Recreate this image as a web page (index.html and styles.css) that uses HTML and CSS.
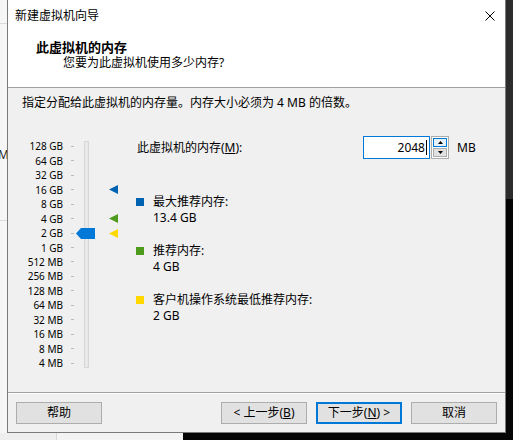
FILE: index.html
```html
<!DOCTYPE html>
<html lang="zh-CN">
<head>
<meta charset="utf-8">
<title>新建虚拟机向导</title>
<link rel="stylesheet" href="styles.css">
</head>
<body>
<div class="desk">
  <div class="side-left">
    <div class="sl-line sl-line-1"></div>
    <div class="sl-m">M</div>
    <div class="sl-line sl-line-2"></div>
  </div>

  <div class="dialog">
    <div class="titlebar">
      <span class="title">新建虚拟机向导</span>
      <svg class="close" width="10" height="10" viewBox="0 0 10 10"><path d="M0.5 0.5 L9.5 9.5 M9.5 0.5 L0.5 9.5" stroke="#000" stroke-width="1" fill="none"/></svg>
    </div>
    <div class="header">
      <div class="h-title">此虚拟机的内存</div>
      <div class="h-sub">您要为此虚拟机使用多少内存?</div>
    </div>
    <div class="body">
      <p class="intro">指定分配给此虚拟机的内存量。内存大小必须为 4 MB 的倍数。</p>
      <div class="content">
        <div class="slider">
          <div class="track"></div>
          <svg class="thumb" width="19" height="11" viewBox="0 0 19 11"><polygon points="0,5.5 5,0 19,0 19,11 5,11" fill="#0078d7"/></svg>
          <svg class="marker m-blue" width="9" height="9" viewBox="0 0 9 9"><polygon points="0,4.5 9,0 9,9" fill="#0063b1"/></svg>
          <svg class="marker m-green" width="9" height="9" viewBox="0 0 9 9"><polygon points="0,4.5 9,0 9,9" fill="#4e9a1c"/></svg>
          <svg class="marker m-yellow" width="9" height="9" viewBox="0 0 9 9"><polygon points="0,4.5 9,0 9,9" fill="#ffd800"/></svg>
          <div class="lbl">128 GB</div><div class="tick"></div>
          <div class="lbl">64 GB</div><div class="tick"></div>
          <div class="lbl">32 GB</div><div class="tick"></div>
          <div class="lbl">16 GB</div><div class="tick"></div>
          <div class="lbl">8 GB</div><div class="tick"></div>
          <div class="lbl">4 GB</div><div class="tick"></div>
          <div class="lbl">2 GB</div><div class="tick"></div>
          <div class="lbl">1 GB</div><div class="tick"></div>
          <div class="lbl">512 MB</div><div class="tick"></div>
          <div class="lbl">256 MB</div><div class="tick"></div>
          <div class="lbl">128 MB</div><div class="tick"></div>
          <div class="lbl">64 MB</div><div class="tick"></div>
          <div class="lbl">32 MB</div><div class="tick"></div>
          <div class="lbl">16 MB</div><div class="tick"></div>
          <div class="lbl">8 MB</div><div class="tick"></div>
          <div class="lbl">4 MB</div><div class="tick"></div>
        </div>

        <div class="panel">
          <div class="mem-row">
            <span class="mem-label">此虚拟机的内存(<u>M</u>):</span>
            <div class="mem-input"><span>2048</span><span class="caret"></span></div>
            <div class="spin">
              <div class="spin-btn spin-up"><svg width="5" height="3" viewBox="0 0 5 3"><polygon points="2.5,0 5,3 0,3" fill="#000"/></svg></div>
              <div class="spin-btn spin-down"><svg width="5" height="3" viewBox="0 0 5 3"><polygon points="0,0 5,0 2.5,3" fill="#000"/></svg></div>
            </div>
            <span class="unit">MB</span>
          </div>

          <div class="legend legend-first">
            <span class="sq sq-blue"></span>
            <div class="legend-text"><div>最大推荐内存:</div><div>13.4 GB</div></div>
          </div>
          <div class="legend">
            <span class="sq sq-green"></span>
            <div class="legend-text"><div>推荐内存:</div><div>4 GB</div></div>
          </div>
          <div class="legend">
            <span class="sq sq-yellow"></span>
            <div class="legend-text"><div>客户机操作系统最低推荐内存:</div><div>2 GB</div></div>
          </div>
        </div>
      </div>
    </div>
    <div class="footer">
      <div class="btn">帮助</div>
      <div class="btn btn-back">&lt; 上一步(<u>B</u>)</div>
      <div class="btn btn-default">下一步(<u>N</u>) &gt;</div>
      <div class="btn">取消</div>
    </div>
  </div>

  <div class="side-right"><div class="sr-top"></div></div>

  <div class="bottom-strip">
    <div class="bs-a"></div>
    <div class="bs-b"></div>
    <div class="bs-c"></div>
  </div>
</div>
</body>
</html>
```

FILE: styles.css
```css
* { box-sizing: border-box; margin: 0; padding: 0; }

html, body {
  width: 513px;
  height: 440px;
  overflow: hidden;
}

body {
  font-family: "Noto Sans", "Noto Sans CJK SC", sans-serif;
  font-size: 12px;
  line-height: 16px;
  color: #000;
  background: #f3f3f3;
}

.desk {
  display: grid;
  grid-template-columns: 7px 499px 7px;
  grid-template-rows: 433px 7px;
  width: 513px;
  height: 440px;
}

/* outside desktop bits */
.side-left {
  grid-column: 1;
  grid-row: 1;
  background: #f6f6f6;
  overflow: hidden;
  display: flex;
  flex-direction: column;
}
.sl-line { height: 1px; background: #dadada; flex: none; }
.sl-line-1 { margin-top: 23px; }
.sl-m { margin-top: 123px; margin-left: -2px; white-space: nowrap; color: #1a1a1a; height: 16px; }
.sl-line-2 { margin-top: 57px; }

.side-right {
  grid-column: 3;
  grid-row: 1 / 3;
  background: #050505;
}
.sr-top { height: 199px; background: #2c2c2c; }

.bottom-strip {
  grid-column: 1 / 3;
  grid-row: 2;
  display: flex;
}
.bs-a { width: 57px; background: #eeeeee; border-right: 1px solid #d6d6d6; }
.bs-b { width: 126px; background: #f3f3f3; }
.bs-c { flex: 1; background: #050505; }

/* dialog */
.dialog {
  grid-column: 2;
  grid-row: 1;
  display: flex;
  flex-direction: column;
  background: #f0f0f0;
  border: 1px solid #7a7a7a;
  border-top: 0;
}

.titlebar {
  height: 31px;
  flex: none;
  background: #fff;
  display: flex;
  align-items: center;
  justify-content: space-between;
  padding: 1px 10px 0 7px;
}

.header {
  height: 57px;
  flex: none;
  background: #fff;
  border-bottom: 1px solid #a0a0a0;
  padding: 8px 0 0 28px;
}
.h-title { font-weight: bold; font-size: 13px; }
.h-sub { padding-left: 27px; }

.body {
  flex: 1;
  padding: 7px 0 0 14px;
}
.intro { margin-bottom: 25px; }

.content { display: flex; align-items: flex-start; }

/* slider */
.slider {
  display: grid;
  grid-template-columns: 41px 8px 4px 1px 8px 5px 6px 14px 9px;
  grid-template-rows: repeat(16, 14.47px);
  padding-top: 3px;
  font-size: 10px;
  line-height: 14px;
}
.lbl {
  grid-column: 1;
  text-align: right;
  align-self: center;
  white-space: nowrap;
  color: #000;
}
.tick {
  grid-column: 3;
  width: 3px;
  height: 1px;
  background: #bcbcbc;
  align-self: center;
}
.track {
  grid-column: 6;
  grid-row: 1 / -1;
  margin: 2px 0 3px;
  background: #e9e9e9;
  border: 1px solid #d7d7d7;
}
.thumb {
  grid-column: 5 / 8;
  grid-row: 7;
  align-self: center;
  position: relative;
  z-index: 1;
}
.marker { grid-column: 9; align-self: center; }
.m-blue { grid-row: 4; }
.m-green { grid-row: 6; }
.m-yellow { grid-row: 7; }

/* right panel */
.panel {
  margin-left: 18px;
  display: flex;
  flex-direction: column;
}
.mem-row {
  display: flex;
  align-items: center;
  height: 23px;
}
.mem-label { width: 227px; padding-left: 1px; white-space: nowrap; }
.mem-input {
  width: 67px;
  height: 23px;
  border: 1px solid #0078d7;
  background: #fff;
  display: flex;
  justify-content: flex-end;
  align-items: center;
  padding-right: 2px;
}
.caret { width: 1px; height: 15px; background: #000; margin-left: 1px; }
.spin {
  margin-left: 1px;
  width: 18px;
  height: 23px;
  border: 1px solid #adadad;
  background: #fff;
  padding: 1px;
  display: flex;
  flex-direction: column;
  gap: 1px;
}
.spin-btn {
  flex: 1;
  display: flex;
  align-items: center;
  justify-content: center;
}
.spin-up { background: #e5f1fb; border: 1px solid #0078d7; }
.spin-down { background: #e1e1e1; border: 1px solid #adadad; }
.unit { margin-left: 8px; }

.legend { display: flex; align-items: flex-start; margin-top: 17px; }
.legend-first { margin-top: 35px; }
.sq { width: 8px; height: 8px; margin: 4px 9px 0 0; flex: none; }
.sq-blue { background: #0063b1; }
.sq-green { background: #4e9a1c; }
.sq-yellow { background: #ffd800; }
.legend-text { white-space: nowrap; }

/* footer */
.footer {
  flex: none;
  height: 40px;
  border-top: 1px solid #a0a0a0;
  box-shadow: inset 0 1px 0 #ffffff;
  padding: 9px 8px 8px;
  display: flex;
  gap: 9px;
}
.btn {
  width: 86px;
  height: 22px;
  border: 1px solid #adadad;
  background: #e1e1e1;
  display: flex;
  align-items: center;
  justify-content: center;
  white-space: nowrap;
}
.btn-back { margin-left: auto; }
.btn-default { border: 2px solid #0078d7; }
```
